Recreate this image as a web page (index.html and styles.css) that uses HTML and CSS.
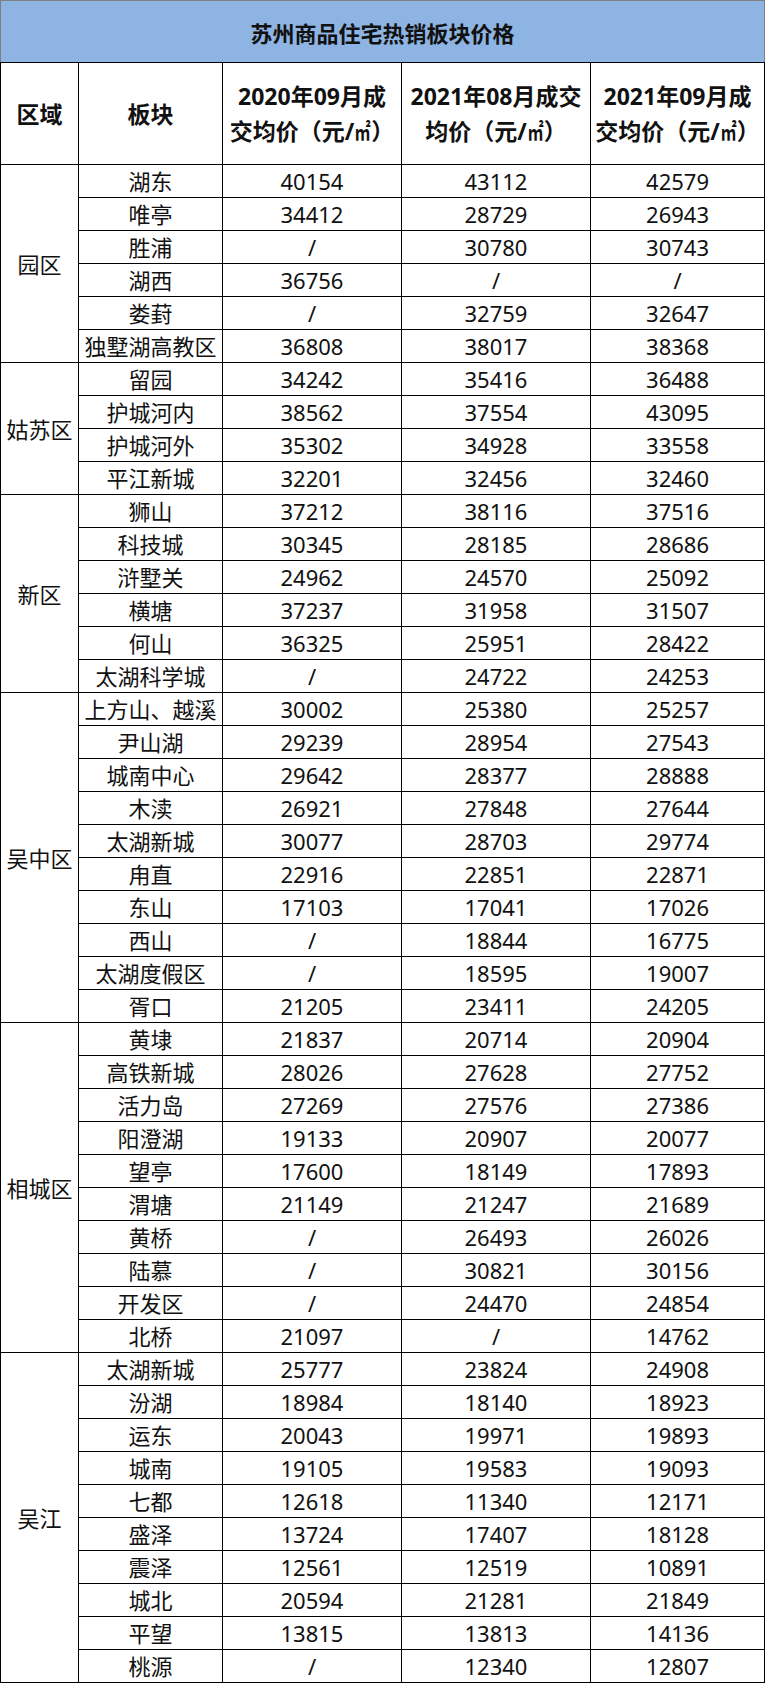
FILE: index.html
```html
<!DOCTYPE html>
<html lang="zh-CN">
<head>
<meta charset="utf-8">
<title>苏州商品住宅热销板块价格</title>
<link rel="stylesheet" href="styles.css">
</head>
<body>
<table class="price-table">
  <colgroup>
    <col class="c-area"><col class="c-block"><col class="c-p1"><col class="c-p2"><col class="c-p3">
  </colgroup>
  <thead>
    <tr class="title-row"><th colspan="5">苏州商品住宅热销板块价格</th></tr>
    <tr class="head-row">
      <th>区域</th>
      <th>板块</th>
      <th>2020年09月成<br>交均价（元/<span class="unit">㎡</span>）</th>
      <th>2021年08月成交<br>均价（元/<span class="unit">㎡</span>）</th>
      <th>2021年09月成<br>交均价（元/<span class="unit">㎡</span>）</th>
    </tr>
  </thead>
  <tbody>
    <tr><td rowspan="6" class="area">园区</td><td>湖东</td><td>40154</td><td>43112</td><td>42579</td></tr>
    <tr><td>唯亭</td><td>34412</td><td>28729</td><td>26943</td></tr>
    <tr><td>胜浦</td><td>/</td><td>30780</td><td>30743</td></tr>
    <tr><td>湖西</td><td>36756</td><td>/</td><td>/</td></tr>
    <tr><td>娄葑</td><td>/</td><td>32759</td><td>32647</td></tr>
    <tr><td>独墅湖高教区</td><td>36808</td><td>38017</td><td>38368</td></tr>

    <tr><td rowspan="4" class="area">姑苏区</td><td>留园</td><td>34242</td><td>35416</td><td>36488</td></tr>
    <tr><td>护城河内</td><td>38562</td><td>37554</td><td>43095</td></tr>
    <tr><td>护城河外</td><td>35302</td><td>34928</td><td>33558</td></tr>
    <tr><td>平江新城</td><td>32201</td><td>32456</td><td>32460</td></tr>

    <tr><td rowspan="6" class="area">新区</td><td>狮山</td><td>37212</td><td>38116</td><td>37516</td></tr>
    <tr><td>科技城</td><td>30345</td><td>28185</td><td>28686</td></tr>
    <tr><td>浒墅关</td><td>24962</td><td>24570</td><td>25092</td></tr>
    <tr><td>横塘</td><td>37237</td><td>31958</td><td>31507</td></tr>
    <tr><td>何山</td><td>36325</td><td>25951</td><td>28422</td></tr>
    <tr><td>太湖科学城</td><td>/</td><td>24722</td><td>24253</td></tr>

    <tr><td rowspan="10" class="area">吴中区</td><td>上方山、越溪</td><td>30002</td><td>25380</td><td>25257</td></tr>
    <tr><td>尹山湖</td><td>29239</td><td>28954</td><td>27543</td></tr>
    <tr><td>城南中心</td><td>29642</td><td>28377</td><td>28888</td></tr>
    <tr><td>木渎</td><td>26921</td><td>27848</td><td>27644</td></tr>
    <tr><td>太湖新城</td><td>30077</td><td>28703</td><td>29774</td></tr>
    <tr><td>甪直</td><td>22916</td><td>22851</td><td>22871</td></tr>
    <tr><td>东山</td><td>17103</td><td>17041</td><td>17026</td></tr>
    <tr><td>西山</td><td>/</td><td>18844</td><td>16775</td></tr>
    <tr><td>太湖度假区</td><td>/</td><td>18595</td><td>19007</td></tr>
    <tr><td>胥口</td><td>21205</td><td>23411</td><td>24205</td></tr>

    <tr><td rowspan="10" class="area">相城区</td><td>黄埭</td><td>21837</td><td>20714</td><td>20904</td></tr>
    <tr><td>高铁新城</td><td>28026</td><td>27628</td><td>27752</td></tr>
    <tr><td>活力岛</td><td>27269</td><td>27576</td><td>27386</td></tr>
    <tr><td>阳澄湖</td><td>19133</td><td>20907</td><td>20077</td></tr>
    <tr><td>望亭</td><td>17600</td><td>18149</td><td>17893</td></tr>
    <tr><td>渭塘</td><td>21149</td><td>21247</td><td>21689</td></tr>
    <tr><td>黄桥</td><td>/</td><td>26493</td><td>26026</td></tr>
    <tr><td>陆慕</td><td>/</td><td>30821</td><td>30156</td></tr>
    <tr><td>开发区</td><td>/</td><td>24470</td><td>24854</td></tr>
    <tr><td>北桥</td><td>21097</td><td>/</td><td>14762</td></tr>

    <tr><td rowspan="10" class="area">吴江</td><td>太湖新城</td><td>25777</td><td>23824</td><td>24908</td></tr>
    <tr><td>汾湖</td><td>18984</td><td>18140</td><td>18923</td></tr>
    <tr><td>运东</td><td>20043</td><td>19971</td><td>19893</td></tr>
    <tr><td>城南</td><td>19105</td><td>19583</td><td>19093</td></tr>
    <tr><td>七都</td><td>12618</td><td>11340</td><td>12171</td></tr>
    <tr><td>盛泽</td><td>13724</td><td>17407</td><td>18128</td></tr>
    <tr><td>震泽</td><td>12561</td><td>12519</td><td>10891</td></tr>
    <tr><td>城北</td><td>20594</td><td>21281</td><td>21849</td></tr>
    <tr><td>平望</td><td>13815</td><td>13813</td><td>14136</td></tr>
    <tr><td>桃源</td><td>/</td><td>12340</td><td>12807</td></tr>
  </tbody>
</table>
</body>
</html>
```

FILE: styles.css
```css
html, body {
  margin: 0;
  padding: 0;
  background: #ffffff;
}

.price-table {
  border-collapse: collapse;
  table-layout: fixed;
  width: 765px;
  font-family: "Noto Sans", "Noto Sans CJK SC", sans-serif;
  color: #111111;
}

.c-area { width: 78px; }
.c-block { width: 144px; }
.c-p1 { width: 179px; }
.c-p2 { width: 189px; }
.c-p3 { width: 174px; }

.price-table th,
.price-table td {
  border: 1px solid #000000;
  padding: 0;
  text-align: center;
  vertical-align: middle;
  white-space: nowrap;
}

.title-row th {
  height: 61px;
  background: #8db4e2;
  font-size: 22px;
  font-weight: 700;
  border-top-color: #808080;
  border-left-color: #808080;
  border-right-color: #808080;
}

.head-row th {
  height: 101px;
  font-size: 23px;
  font-weight: 700;
  line-height: 34px;
}

.unit {
  font-family: "Noto Sans CJK SC", sans-serif;
  display: inline-block;
  transform: scaleX(0.7);
  margin: 0 -3px;
}

.price-table td {
  height: 32px;
  font-size: 22px;
  font-weight: 400;
  line-height: 32px;
}
```
